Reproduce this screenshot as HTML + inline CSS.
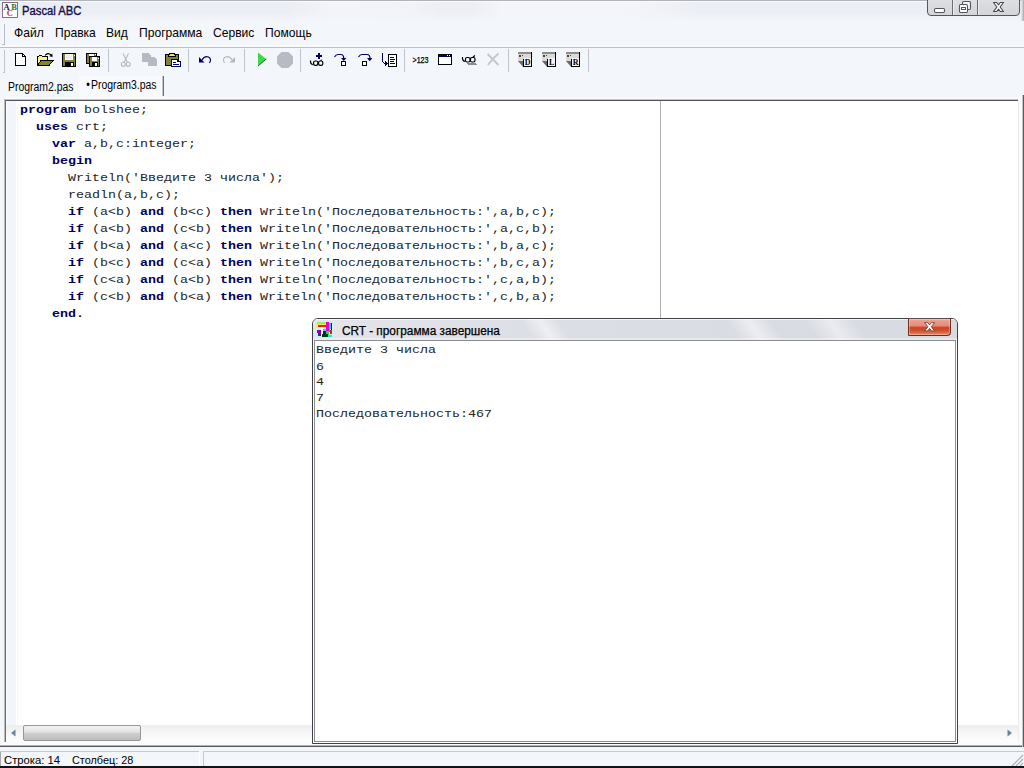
<!DOCTYPE html>
<html><head><meta charset="utf-8"><title>Pascal ABC</title>
<style>
*{box-sizing:border-box;margin:0;padding:0}
html,body{width:1024px;height:768px;overflow:hidden;background:#f3f6fb;font-family:"Liberation Sans",sans-serif;font-size:12px;color:#000}
.abs{position:absolute}
.sx{transform-origin:0 50%;white-space:nowrap;display:block}
#titlebar{left:0;top:0;width:1024px;height:21px;background:linear-gradient(rgba(244,246,251,.05) 0,rgba(244,246,251,.1) 55%,rgba(244,246,251,.9) 100%),linear-gradient(90deg,#ebedf4 0,#ebedf4 28%,#f3f4f9 32.500%,#f2f3f8 40%,#eceef4 43%,#eceef4 46%,#f4f5fa 49%,#f3f4fa 62.500%,#ebedf4 68.500%,#ebedf4 100%);border-top:1px solid #b2b3b8;box-shadow:inset 0 1px 0 #f9fafc}
#title{left:22px;top:3px;font-size:12.5px;color:#101046;-webkit-text-stroke:.35px #101046;transform:scaleX(.9)}
#menubar{left:0;top:21px;width:1024px;height:27px;background:#f3f6fb;border-bottom:1px solid #bdc0c7;box-shadow:inset 0 -2px 0 #f9fafd}
.mi{top:4px;font-size:13px;transform:scaleX(.93)}
#toolbar{left:0;top:48px;width:1024px;height:28px;background:#f3f6fb}
#tabs{left:0;top:76px;width:1024px;height:24px;background:#f3f6fb}
.tab{font-size:12px;transform:scaleX(.86)}
#editor{left:5px;top:99px;width:1013px;height:643px;background:#fff;border-left:1px solid #6e6e70;border-top:2px solid #555558}
#editor:before{content:"";position:absolute;left:-1px;top:-2px;width:1013px;height:1px;background:#c6c6c8}
pre{font-family:"Liberation Mono",monospace}
#code{left:14px;top:1px;font-size:13.33px;line-height:20px;color:#242424;transform:scaleY(.85);transform-origin:0 0}
#code b{color:#000060}
#status{left:0;top:748px;width:1024px;height:20px;background:#f3f6fb}
#crt{left:312px;top:318px;width:646px;height:426px;background:#fff;border:1px solid #404148;border-radius:6px 6px 0 0}
#crtout{left:3px;top:23.7px;font-size:13.33px;color:#242424;line-height:18.605px;transform:scaleY(.86);transform-origin:0 0}
</style></head><body>
<div id="titlebar" class="abs"><svg class="abs" style="left:2px;top:1px" width="16" height="16" viewBox="2 2 16 16"><rect x="2.500" y="2.500" width="15" height="15" fill="#fff" stroke="#8c6a8a" shape-rendering="crispEdges"/><g font-family="Liberation Serif,serif" font-weight="bold" font-size="8.500"><text x="3.600" y="9.600" fill="#14145c">A</text><text x="11.300" y="9.600" fill="#128034">B</text><text x="6.800" y="16.300" fill="#b63434">C</text></g></svg><div id="title" class="abs sx">Pascal ABC</div></div>
<div id="menubar" class="abs"><div class="abs" style="left:4px;top:3px;width:1px;height:21px;background:#b9bcc6"></div><div class="abs" style="left:2px;top:23px;width:2px;height:1px;background:#b9bcc6"></div>
<div class="abs mi sx" id="m1" style="left:13.500px">Файл</div>
<div class="abs mi sx" id="m2" style="left:55px">Правка</div>
<div class="abs mi sx" id="m3" style="left:106px">Вид</div>
<div class="abs mi sx" id="m4" style="left:139px">Программа</div>
<div class="abs mi sx" id="m5" style="left:213px">Сервис</div>
<div class="abs mi sx" id="m6" style="left:265px">Помощь</div>
</div>
<div id="toolbar" class="abs"><svg class="abs" style="left:0;top:0" width="1024" height="28" viewBox="0 48 1024 28" shape-rendering="crispEdges">
<g fill="none" stroke="#c0c3cc" stroke-width="1">
<path d="M4.5 50v22.5h-2"/>
<path d="M108.5 49v23M188.5 49v23M244.5 49v23M300.5 49v23M404.5 49v23M508.5 49v23M588.5 49v23"/>
</g>
<!-- new -->
<path d="M15.5 53.5h7l3 3v9h-10z" fill="#fff" stroke="#000"/>
<path d="M22.5 53.5v3h3" fill="none" stroke="#000"/>
<!-- open -->
<path d="M37.500 65.500v-9h1l1-1h2l1 1h4.500v4" fill="#f4f48a" stroke="#000"/>
<path d="M37.500 65.500l3.500-5h12l-4 5z" fill="#84842e" stroke="#000"/>
<g shape-rendering="auto"><path d="M45 55.500q3-3.500 6-0.500" fill="none" stroke="#000" stroke-width="1.100"/><path d="M49.300 56.300l3.300 0.700l-0.300-3.500z" fill="#000"/></g>
<!-- save -->
<rect x="62.500" y="53.500" width="13" height="13" fill="#80803c" stroke="#000"/>
<rect x="65" y="54" width="8" height="6" fill="#fafafa"/><rect x="66" y="55" width="6" height="4" fill="#ececec"/><rect x="74" y="55" width="1" height="1" fill="#fff"/>
<rect x="65" y="62" width="9" height="4" fill="#000"/><rect x="71" y="63" width="2" height="3" fill="#fff"/>
<!-- save all -->
<rect x="86.500" y="53.500" width="10" height="10" fill="#80803c" stroke="#000"/><rect x="89" y="54" width="5" height="2" fill="#fff"/><rect x="95" y="54" width="1" height="1" fill="#fff"/>
<rect x="89.500" y="56.500" width="10" height="10" fill="#80803c" stroke="#000"/><rect x="92" y="57" width="5" height="4" fill="#fafafa"/><rect x="98" y="58" width="1" height="1" fill="#fff"/><rect x="92" y="62" width="6" height="4" fill="#000"/><rect x="95" y="63" width="2" height="3" fill="#fff"/>
<!-- cut (disabled) -->
<g shape-rendering="auto" fill="none" stroke="#b4b8c2" stroke-width="1.100"><path d="M123 53.500l4.500 9M128.500 53.500l-4.500 9"/><circle cx="123.300" cy="64.300" r="2"/><circle cx="128.200" cy="64.300" r="2"/></g>
<!-- copy (disabled) -->
<path d="M142 53h6l3 3v6h-9z" fill="#b6bac3"/><path d="M148 57h6l3 3v6h-9z" fill="#b6bac3"/>
<!-- paste -->
<rect x="165.500" y="54.500" width="13" height="11" rx="1" fill="#80803c" stroke="#000"/>
<path d="M168.500 56.500v-1.500l2-2h3l2 2v1.500z" fill="#e8e860" stroke="#000"/>
<path d="M171.500 59.500h6v2h3v5h-9z" fill="#fff" stroke="#000060"/><path d="M171 66h10" stroke="#000060"/><path d="M173 62.500h3M173 64.500h6" stroke="#000060"/>
<!-- undo / redo -->
<g shape-rendering="auto"><path d="M202 60q2.500-4.500 6.500-3q3.500 2 1 6" fill="none" stroke="#000060" stroke-width="1.150"/><path d="M199 57v5.500h5.500z" fill="#000060"/>
<path d="M232 60q-2.500-4.500-6.500-3q-3.500 2-1 6" fill="none" stroke="#b4b8c2" stroke-width="1.100"/><path d="M235 57v5.500h-5.500z" fill="#b4b8c2"/>
<!-- run / stop -->
<path d="M258 52.500v13.500l8.300-7z" fill="#3fd84a"/><path d="M258 66l8.300-7" stroke="#1c6a22" stroke-width="1" fill="none"/>
<path d="M281.500 52h7l4.500 4.500v7l-4.500 4.500h-7l-4.500-4.500v-7z" fill="#b7bbc3"/></g>
<!-- add watch -->
<path d="M316 55h6v2h-6zM318 53h2v6h-2z" fill="#000060"/>
<g shape-rendering="auto" fill="none" stroke="#000" stroke-width="1.200"><rect x="313.600" y="61" width="4.200" height="4.400" rx="1.600"/><rect x="318.600" y="61" width="4.200" height="4.400" rx="1.600"/><path d="M312.800 64.800q-2.800-1.300-2.300-4.300"/><path d="M320.500 60.500l1.300-0.500"/></g>
<!-- step into -->
<g shape-rendering="auto" fill="none" stroke="#000060" stroke-width="1.200"><path d="M334.500 57q1.500-2.500 3.500-2.500h3q2.700 0 2.700 4"/><path d="M358.500 57q1.500-2.500 3.500-2.500h5q3 0 3 4"/></g>
<path d="M341 58h5.400l-2.700 3z" fill="#000060" shape-rendering="auto"/><rect x="341.500" y="61.500" width="4" height="4" fill="#fff" stroke="#000"/>
<path d="M367 58h5.400l-2.700 3.200z" fill="#000060" shape-rendering="auto"/><rect x="362.500" y="61.500" width="4" height="4" fill="#fff" stroke="#000"/>
<!-- run to cursor -->
<path d="M382.500 53v8.500l2 2h2" fill="none" stroke="#000060"/><path d="M385 61l2.500 2.500l-2.500 2.500z" fill="#000060"/>
<rect x="388.500" y="54.500" width="8" height="12" fill="#fff" stroke="#000"/><path d="M390 57.500h4M390 59.500h5M390 61.500h4M390 63.500h5" stroke="#000060"/>
<!-- >123 -->
<text x="412.500" y="63" font-family="Liberation Sans,sans-serif" font-size="8.500" textLength="16" lengthAdjust="spacingAndGlyphs" fill="#000" stroke="#000" stroke-width=".25" shape-rendering="auto">&gt;123</text>
<!-- window -->
<rect x="438.500" y="54.500" width="13" height="10" fill="#fff" stroke="#000"/><rect x="439" y="55" width="12" height="2" fill="#000060"/><rect x="447" y="55" width="1" height="1" fill="#fff"/><rect x="449" y="55" width="1" height="1" fill="#fff"/>
<!-- watches -->
<g shape-rendering="auto" fill="none" stroke="#000" stroke-width="1.200"><rect x="465.500" y="57.500" width="4.500" height="4.500" rx="1.500"/><rect x="470.500" y="57.500" width="4.500" height="4.500" rx="1.500"/><path d="M465 61.500q-3-1-2.500-4.500"/><path d="M473 57l2-1.500"/></g>
<path d="M467 63h9v1h1v1h-9z" fill="#8c8c8c"/>
<!-- X disabled -->
<g shape-rendering="auto" stroke="#c3c6ce" stroke-width="1.800" fill="none"><path d="M487.500 54l11 11M498.500 53.500q-6 5-10.500 11.500"/></g>
<!-- D L R -->
<g>
<rect x="518" y="52" width="14" height="15" fill="#dadada"/><rect x="518" y="52" width="14" height="2" fill="#8c8c8c"/><rect x="524" y="58" width="7" height="8" fill="#f6f6f6"/>
<path d="M531.500 52v15M523 66.500h9M523.500 59v8" stroke="#000" fill="none"/><path d="M518 61h5v6z" fill="#6a6a6a" shape-rendering="auto"/><path d="M518 61.500v5.500h5z" fill="#f3f6fb" shape-rendering="auto"/>
<rect x="519" y="55" width="2" height="2" fill="#444"/><rect x="522" y="55" width="1" height="1" fill="#444"/>
</g><g transform="translate(24 0)">
<rect x="518" y="52" width="14" height="15" fill="#dadada"/><rect x="518" y="52" width="14" height="2" fill="#8c8c8c"/><rect x="524" y="58" width="7" height="8" fill="#f6f6f6"/>
<path d="M531.500 52v15M523 66.500h9M523.500 59v8" stroke="#000" fill="none"/><path d="M518 61h5v6z" fill="#6a6a6a" shape-rendering="auto"/><path d="M518 61.500v5.500h5z" fill="#f3f6fb" shape-rendering="auto"/>
<rect x="519" y="55" width="2" height="2" fill="#444"/><rect x="522" y="55" width="1" height="1" fill="#444"/>
</g><g transform="translate(48 0)">
<rect x="518" y="52" width="14" height="15" fill="#dadada"/><rect x="518" y="52" width="14" height="2" fill="#8c8c8c"/><rect x="524" y="58" width="7" height="8" fill="#f6f6f6"/>
<path d="M531.500 52v15M523 66.500h9M523.500 59v8" stroke="#000" fill="none"/><path d="M518 61h5v6z" fill="#6a6a6a" shape-rendering="auto"/><path d="M518 61.500v5.500h5z" fill="#f3f6fb" shape-rendering="auto"/>
<rect x="519" y="55" width="2" height="2" fill="#444"/><rect x="522" y="55" width="1" height="1" fill="#444"/>
</g>

<g font-family="Liberation Serif,serif" font-weight="bold" font-size="8" fill="#000" shape-rendering="auto"><text x="524.800" y="65">D</text><text x="549" y="65">L</text><text x="572.800" y="65">R</text></g>
</svg>
</div>
<div id="tabs" class="abs">
<div class="abs tab sx" id="t1" style="left:7.500px;top:4px;transform:scaleX(.87)">Program2.pas</div>
<div class="abs" style="left:79px;top:0;width:83px;height:21px;background:#f9fafd"></div><div class="abs" style="left:162px;top:0;width:1px;height:20px;background:#c3c4cc"></div><div class="abs" style="left:163px;top:0;width:1px;height:20px;background:#6c6d76"></div><div class="abs tab" style="left:86px;top:2px;font-size:12px">•</div><div class="abs tab sx" id="t2" style="left:91px;top:2px;transform:scaleX(.87)">Program3.pas</div>
</div>
<div id="editor" class="abs">
<pre id="code" class="abs"><b>program</b> bolshee;
  <b>uses</b> crt;
    <b>var</b> a,b,c:integer;
    <b>begin</b>
      Writeln('Введите 3 числа');
      readln(a,b,c);
      <b>if</b> (a&lt;b) <b>and</b> (b&lt;c) <b>then</b> Writeln('Последовательность:',a,b,c);
      <b>if</b> (a&lt;b) <b>and</b> (c&lt;b) <b>then</b> Writeln('Последовательность:',a,c,b);
      <b>if</b> (b&lt;a) <b>and</b> (a&lt;c) <b>then</b> Writeln('Последовательность:',b,a,c);
      <b>if</b> (b&lt;c) <b>and</b> (c&lt;a) <b>then</b> Writeln('Последовательность:',b,c,a);
      <b>if</b> (c&lt;a) <b>and</b> (a&lt;b) <b>then</b> Writeln('Последовательность:',c,a,b);
      <b>if</b> (c&lt;b) <b>and</b> (b&lt;a) <b>then</b> Writeln('Последовательность:',c,b,a);
    <b>end.</b></pre>
<div class="abs" style="left:1px;top:0;width:9px;height:624px;background:#f2f5fc"></div><div class="abs" style="left:11px;top:0;width:1px;height:624px;background:#f8f8f8"></div>
<div class="abs" style="left:654px;top:0;width:1px;height:624px;background:#b2b2b2"></div>
<div class="abs" id="hscroll" style="left:0;top:624px;width:1012px;height:17px;background:linear-gradient(#eeeeef,#f6f6f7 45%,#fdfdfd)">
<div class="abs" style="left:17px;top:0;width:118px;height:16px;border:1px solid #979797;border-radius:2px;background:linear-gradient(#f3f3f3,#e2e2e2 45%,#cfcfcf 50%,#bdbdbd)"></div>
<svg class="abs" style="left:0;top:0" width="1012" height="17"><path d="M9.500 4.500v7l-4.500-3.500z" fill="#6d8298"/><path d="M1001.500 4.500v7l4.500-3.500z" fill="#6d8298"/></svg>
</div>
<div class="abs" style="left:1012px;top:0;width:1px;height:645px;background:#fff"></div>

</div>
<div id="status" class="abs"><div class="abs sx" id="st" style="left:4px;top:6px;font-size:11.5px;transform:scaleX(.98)">Строка: 14</div><div class="abs sx" id="st2" style="left:72px;top:6px;font-size:11.5px;transform:scaleX(.945)">Столбец: 28</div><div class="abs" style="left:0;top:-6px;width:1024px;height:3px;background:#fafafb"></div><div class="abs" style="left:0;top:-3px;width:1024px;height:1px;background:#b6b6b8"></div><div class="abs" style="left:0;top:-2px;width:1024px;height:1px;background:#58585c"></div><div class="abs" style="left:0;top:4px;width:1px;height:14px;background:#a6a8b0"></div>
<div class="abs" style="left:0;top:3px;width:199px;height:1px;background:#c3c9d6"></div>
<div class="abs" style="left:203px;top:3px;width:821px;height:1px;background:#c3c9d6"></div>
<div class="abs" style="left:203px;top:3px;width:1px;height:15px;background:#c3c9d6"></div>
<div class="abs" style="left:199px;top:3px;width:1px;height:15px;background:#fff"></div>
<div class="abs" style="left:0;top:18px;width:1024px;height:2px;background:#141414"></div>
<svg class="abs" style="left:1010px;top:6px" width="14" height="12"><path d="M13 1L2 12M13 5L6 12M13 9L10 12" stroke="#a9aeb8" stroke-width="1.200" fill="none"/></svg>
</div>
<div id="crt" class="abs">
<div class="abs" id="crtbar" style="left:0;top:0;width:644px;height:21px;border-radius:5px 5px 0 0;overflow:hidden;background:linear-gradient(90deg,#e3e5eb,#dcdee5 40%,#d8dae2)">
<div class="abs" style="left:215px;top:-4px;width:36px;height:30px;transform:skewX(35deg);background:linear-gradient(90deg,rgba(255,255,255,0),rgba(255,255,255,.5) 50%,rgba(255,255,255,0))"></div>
<div class="abs" style="left:420px;top:-4px;width:44px;height:30px;transform:skewX(35deg);background:linear-gradient(90deg,rgba(255,255,255,0),rgba(255,255,255,.5) 50%,rgba(255,255,255,0))"></div>
<div class="abs" style="left:498px;top:-4px;width:50px;height:30px;transform:skewX(35deg);background:linear-gradient(90deg,rgba(255,255,255,0),rgba(255,255,255,.45) 50%,rgba(255,255,255,0))"></div>
<div class="abs" style="left:0;top:0;width:644px;height:1px;background:rgba(255,255,255,.75)"></div>
<div class="abs" style="left:0;top:19px;width:644px;height:2px;background:rgba(255,255,255,.35)"></div>
</div>
<div class="abs" style="left:1px;top:21px;width:642px;height:402px;border:1px solid #8b8c94;background:#fff"></div>
<svg class="abs" style="left:3px;top:2px" width="18" height="17" viewBox="316 321 18 17" shape-rendering="crispEdges">
<rect x="316" y="321" width="18" height="17" fill="#c8f6f6" opacity=".55"/>
<rect x="317" y="322" width="9" height="2" fill="#a0e860"/><rect x="316" y="324" width="10" height="4" fill="#f2ee5a"/>
<rect x="318" y="325" width="8" height="2" fill="#d62a00"/>
<rect x="326" y="322" width="3" height="9" fill="#e400c4"/>
<rect x="321" y="327" width="2" height="8" fill="#fff"/>
<rect x="323" y="329" width="3" height="2" fill="#20d8f0"/><rect x="323" y="331" width="3" height="3" fill="#001890"/>
<rect x="317" y="330" width="4" height="3" fill="#9000b0"/><rect x="318" y="333" width="3" height="3" fill="#402090"/>
<rect x="326" y="331" width="3" height="5" fill="#22e246"/>
<rect x="322" y="334" width="6" height="3" fill="#003a10"/>
<rect x="331" y="323" width="1" height="8" fill="#101078"/><rect x="329" y="323" width="2" height="6" fill="#40b0ff"/>
<rect x="330" y="330" width="2" height="4" fill="#d02020"/><rect x="329" y="329" width="1" height="3" fill="#b060e0"/>
<rect x="328" y="335" width="4" height="2" fill="#20e8d0"/>
</svg>
<div class="abs" id="crtclose" style="left:595px;top:-1px;width:43px;height:18px;border:1px solid #6e2c24;border-top-color:#5a4a50;border-radius:0 0 4px 1px;background:linear-gradient(#eaa596 0,#e28a74 45%,#cf4526 50%,#d24a2a 70%,#e58a66 100%);box-shadow:inset 0 0 0 1px rgba(255,255,255,.3)">
<svg class="abs" style="left:0;top:0" width="41" height="16" viewBox="909 319 41 16">
<path d="M924.600 322.600h3.100l1.900 2.400l1.900-2.400h3.100l-3.300 4.100l3.300 4.200h-3.100l-1.900-2.500l-1.900 2.500h-3.100l3.300-4.200z" fill="#fff" stroke="#6a3028" stroke-opacity=".8" stroke-width="1" stroke-linejoin="round"/>
</svg>
</div>

<div class="abs sx" id="crttitle" style="left:29px;top:5px;font-size:12px;-webkit-text-stroke:.25px #000;transform:scaleX(.985)">CRT - программа завершена</div>
<pre id="crtout" class="abs">Введите 3 числа
6
4
7
Последовательность:467</pre>
</div>
<div class="abs" id="winbtn" style="left:927px;top:-1px;width:93px;height:17px;border:1px solid #55565c;border-radius:0 0 4px 4px;background:linear-gradient(#dedfe2,#d3d5d8);overflow:hidden">
<div class="abs" style="left:24px;top:0;width:1px;height:16px;background:#6a6b70"></div>
<div class="abs" style="left:25px;top:0;width:1px;height:16px;background:#eceef0"></div>
<div class="abs" style="left:49px;top:0;width:1px;height:16px;background:#6a6b70"></div>
<div class="abs" style="left:50px;top:0;width:1px;height:16px;background:#eceef0"></div>
<svg class="abs" style="left:0;top:0" width="92" height="16" viewBox="928 0 92 16">
<rect x="934.500" y="8.500" width="10" height="4" rx="1.200" fill="#fff" stroke="#54555c" stroke-width="1.100"/>
<rect x="962.500" y="1.500" width="8" height="8" rx="1.200" fill="#f4f4f6" stroke="#54555c" stroke-width="1.100"/>
<rect x="959.500" y="4.500" width="8" height="8" rx="1.200" fill="#fff" stroke="#54555c" stroke-width="1.100"/>
<rect x="961.500" y="7.500" width="4" height="2" fill="#fff" stroke="#54555c" stroke-width="1"/>
<path d="M993.500 2.500h3.200l1.800 2.300l1.800-2.300h3.200l-3.400 4.500l3.400 4.500h-3.200l-1.800-2.300l-1.800 2.300h-3.200l3.400-4.500z" fill="#fff" stroke="#4a4b52" stroke-width="1.200" stroke-linejoin="round"/>
</svg>
</div>
<div class="abs" style="left:1021px;top:0;width:3px;height:21px;background:linear-gradient(90deg,#e6e7ee,#cfd0d6 50%,#a4a5ac)"></div>
<div class="abs" style="left:5px;top:97px;width:1013px;height:2px;background:#fafafa"></div><div class="abs" style="left:0;top:99px;width:4px;height:643px;background:#f5f8f7"></div><div class="abs" style="left:4px;top:99px;width:1px;height:643px;background:#b8bbc0"></div><div class="abs" style="left:1019px;top:97px;width:3px;height:645px;background:#fbfbfc"></div><div class="abs" style="left:1022px;top:95px;width:2px;height:652px;background:linear-gradient(90deg,#c6c6cb 0,#c6c6cb 50%,#5a5a62 50%,#5a5a62 100%)"></div><div class="abs" style="left:1018px;top:101px;width:1px;height:641px;background:#ececee"></div>

</body></html>
